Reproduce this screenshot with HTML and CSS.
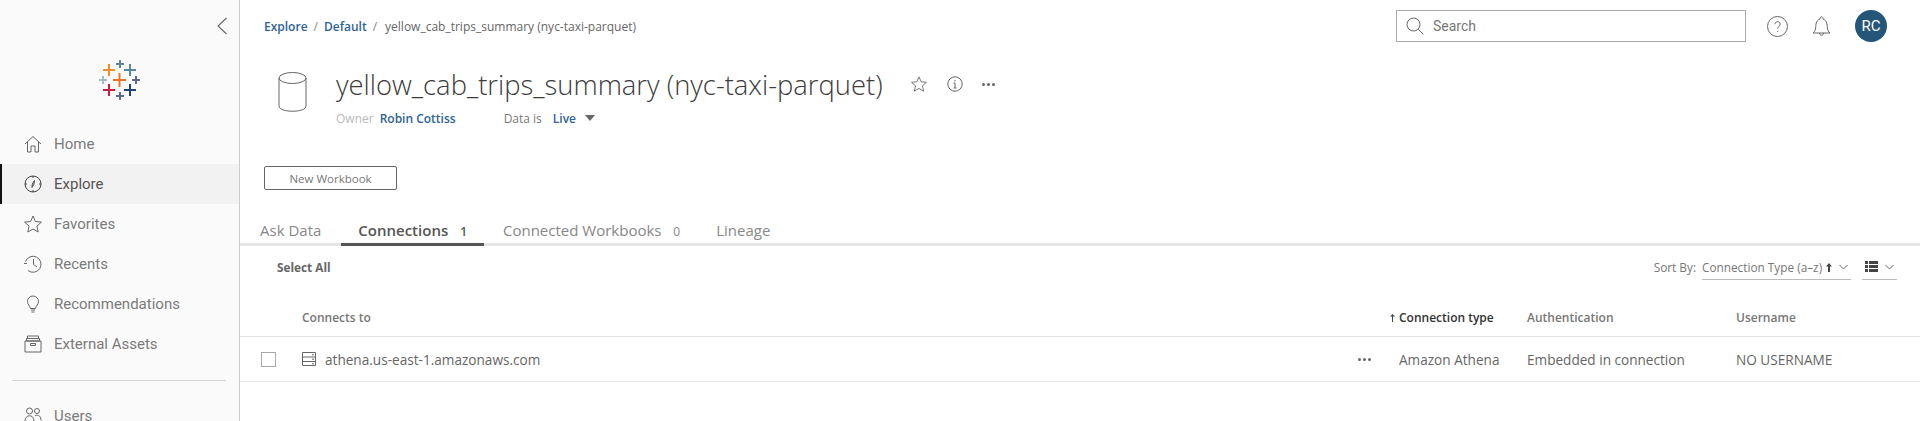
FILE: index.html
```html
<!DOCTYPE html>
<html lang="en">
<head>
	<meta charset="UTF-8">
	<title>yellow_cab_trips_summary (nyc-taxi-parquet)</title>
	<link rel="stylesheet" href="styles.css">
</head>
<body>
	<div class="page">
		<aside class="side">
			<div class="collapse">
				<svg width="12" height="18" viewBox="0 0 12 18"><path d="M10.5 1 2 9l8.500 8" fill="none" stroke="#666" stroke-width="1.100"/></svg>
			</div>
			<div class="logo">
				<svg width="42" height="42" viewBox="0 0 42 42" fill="none" stroke-width="2">
					<path d="M14 21h13M20.500 14v14" stroke="#e8762d"/>
					<path d="M4 11h12M10 5v12" stroke="#f28e2b"/>
					<path d="M17 5h8M21 1v8" stroke="#5b879b"/>
					<path d="M25 11h12M31 5v12" stroke="#5b879b"/>
					<path d="M0 21h8M4 17v8" stroke="#a0bdc8"/>
					<path d="M33 21h8M37 17v8" stroke="#5d6a97"/>
					<path d="M4 31h12M10 25v12" stroke="#c8203f"/>
					<path d="M25 31h12M31 25v12" stroke="#1f447a"/>
					<path d="M17 37h8M21 33v8" stroke="#5b6c96"/>
				</svg>
			</div>
			<nav class="nav">
				<a class="nav-item">
					<svg width="18" height="18" viewBox="0 0 18 18" class="ico"><path d="M1 9 9 1.500 17 9M3.500 7v10h3.500v-6h4v6h3.500V7"/></svg>
					Home
				</a>
				<a class="nav-item active">
					<svg width="18" height="18" viewBox="0 0 18 18" class="ico dark"><circle cx="9" cy="9" r="8"/><path d="M10.500 5.500 9.800 9.500 8 12.500l.3-3.500zM9 1v2M9 15v2M1 9h2M15 9h2"/></svg>
					Explore
				</a>
				<a class="nav-item">
					<svg width="18" height="18" viewBox="0 0 18 18" class="ico"><path d="m9 1 2.400 5.500 6 .6-4.500 4 1.300 5.900L9 14l-5.200 3 1.300-5.900-4.500-4 6-.6z"/></svg>
					Favorites
				</a>
				<a class="nav-item">
					<svg width="18" height="18" viewBox="0 0 18 18" class="ico"><path d="M1.500 6.500A8 8 0 1 1 4 15.500M9.500 4v5.500l3.500 2.500M0 8.500h3"/></svg>
					Recents
				</a>
				<a class="nav-item">
					<svg width="18" height="18" viewBox="0 0 18 18" class="ico"><path d="M6.500 13.500C6 10.500 3.500 9.500 3.500 6.500a5.500 5.500 0 0 1 11 0c0 3-2.500 4-3 7zM7 15h4M7.500 17h3"/></svg>
					Recommendations
				</a>
				<a class="nav-item">
					<svg width="18" height="18" viewBox="0 0 18 18" class="ico"><path d="M1 6h16v11H1zM2.500 3.500h13V6h-13zM3.500 1h11v2.500h-11zM6.500 8.500h5v2h-5z"/></svg>
					External Assets
				</a>
			</nav>
			<div class="side-rule"></div>
			<a class="nav-item">
				<svg width="18" height="18" viewBox="0 0 18 18" class="ico"><circle cx="5.500" cy="4" r="3"/><circle cx="13" cy="4" r="2.500"/><path d="M1 14c0-7 9-7 9 0M11 8.500c4-1 6 1 6 5"/></svg>
				Users
			</a>
		</aside>

		<main class="main">
			<header class="top">
				<div class="crumbs">
					<a>Explore</a><span class="sep">/</span><a>Default</a><span class="sep sep-last">/</span><span class="here">yellow_cab_trips_summary (nyc-taxi-parquet)</span>
				</div>
				<div class="search">
					<svg width="18" height="18" viewBox="0 0 18 18" class="ico"><circle cx="7.500" cy="7.500" r="6.500"/><path d="m12.300 12.300 5 5"/></svg>
					<span>Search</span>
				</div>
				<svg class="help ico" width="21" height="21" viewBox="0 0 21 21"><circle cx="10.500" cy="10.500" r="10"/><path d="M8 8.200c0-3.300 5.200-3.300 5.200 0 0 2-2.500 1.900-2.500 4.300M10.700 15v1"/></svg>
				<svg class="bell ico" width="19" height="22" viewBox="0 0 19 22"><path d="M1 18c3-2.500 2.500-5 3-9 .4-3 2.500-4.500 4-5 0-3 3-3 3 0 1.500.5 3.600 2 4 5 .5 4 0 6.500 3 9zM7.500 18c0 3 4 3 4 0"/></svg>
				<div class="avatar">RC</div>
			</header>

			<section class="head">
				<svg class="cyl ico" width="29" height="41" viewBox="0 0 29 41"><ellipse cx="14.500" cy="6" rx="13.500" ry="5.500"/><path d="M1 6v28c0 7 27 7 27 0V6"/></svg>
				<div>
					<div class="title-row">
						<h1>yellow_cab_trips_summary (nyc-taxi-parquet)</h1>
						<svg class="ico" width="16" height="16" viewBox="0 0 18 18"><path d="m9 1 2.400 5.500 6 .6-4.500 4 1.300 5.900L9 14l-5.200 3 1.300-5.900-4.500-4 6-.6z"/></svg>
						<svg class="ico" width="16" height="16" viewBox="0 0 16 16"><circle cx="8" cy="8" r="7.200"/><path d="M8 7v5M6.500 12h3M6.500 7H8M8 4v1.500"/></svg>
						<div class="dots title-dots"><i></i><i></i><i></i></div>
					</div>
					<div class="meta">
						<span class="muted">Owner</span><a class="owner">Robin Cottiss</a>
						<span class="data-is">Data is</span><a class="live">Live</a><span class="tri"></span>
					</div>
				</div>
			</section>

			<button class="new-btn">New Workbook</button>

			<div class="tabs">
				<a class="tab ask">Ask Data</a>
				<a class="tab on">Connections <b>1</b></a>
				<a class="tab wb">Connected Workbooks <em>0</em></a>
				<a class="tab">Lineage</a>
			</div>

			<div class="tools">
				<strong>Select All</strong>
				<div class="sort">
					<span class="sort-label">Sort By:</span>
					<span class="pick pick-wide">
						<span class="pick-text">Connection Type (a–z)
							<svg width="6" height="9" viewBox="0 0 6 9" class="arrow"><path d="M3 0 6 3.500H4V9H2V3.500H0z"/></svg>
						</span>
						<svg width="9" height="6" viewBox="0 0 9 6"><path d="m.5 1 4 4 4-4" fill="none" stroke="#666"/></svg>
					</span>
					<span class="pick pick-view">
						<svg width="13" height="11" viewBox="0 0 13 11" class="list-ico"><path d="M0 0h3v3H0zM4 0h9v3H4zM0 4h3v3H0zM4 4h9v3H4zM0 8h3v3H0zM4 8h9v3H4z"/></svg>
						<svg width="9" height="6" viewBox="0 0 9 6"><path d="m.5 1 4 4 4-4" fill="none" stroke="#666"/></svg>
					</span>
				</div>
			</div>

			<div class="grid grid-head">
				<span></span>
				<span>Connects to</span>
				<span class="sorted"><svg width="5" height="9" viewBox="0 0 5 9" class="arrow"><path d="M2.500 1 5 3.500H3V9H2V3.500H0z"/></svg>Connection type</span>
				<span>Authentication</span>
				<span>Username</span>
			</div>
			<div class="grid grid-row">
				<span class="check"></span>
				<span class="conn">
					<svg width="14" height="14" viewBox="0 0 14 14" class="ico"><path d="M.5.5h13v13H.5zM.5 5h13M.5 9.500h13M10 2.800h2M10 7.200h2M10 11.800h2"/></svg>
					<span class="conn-name">athena.us-east-1.amazonaws.com</span>
					<span class="dots row-dots"><i></i><i></i><i></i></span>
				</span>
				<span class="type">Amazon Athena</span>
				<span>Embedded in connection</span>
				<span>NO USERNAME</span>
			</div>
		</main>
	</div>
</body>
</html>
```

FILE: styles.css
```css
*{margin: 0;padding: 0;box-sizing: border-box;}
html,body{height: 100%;overflow: hidden;}
body{background: #fff;color: #666;font-family: Roboto,"Liberation Sans",sans-serif;font-size: 13px;}
a{text-decoration: none;}
.ico{fill: none;stroke: #666;stroke-width: 1;flex: none;}
.page{display: flex;height: 421px;overflow: hidden;}

.side{width: 240px;flex: none;height: 421px;background: #fafafa;border-right: 1px solid #cbcbcb;overflow: hidden;}
.collapse{display: flex;justify-content: flex-end;padding: 17px 11px 0 0;height: 59px;}
.logo{display: flex;justify-content: center;height: 65px;}
.nav-item{display: flex;align-items: center;height: 40px;padding-left: 24px;gap: 12px;font-size: 15px;color: #7b7b7b;}
.nav-item svg{width: 18px;height: 18px;}
.nav-item.active{background: #f2f2f2;border-left: 2px solid #111;padding-left: 22px;color: #555;}
.ico.dark{stroke: #444;}
.side-rule{height: 1px;background: #d4d4d4;margin: 16px 13px 15px 12px;}

.main{flex: 1;min-width: 0;}
.top{display: flex;align-items: center;height: 52px;padding: 0 33px 0 24px;}
.crumbs{flex: 1;font-size: 12px;font-family: "Open Sans",Roboto,sans-serif;color: #666;white-space: nowrap;}
.crumbs a{color: #2e6397;font-weight: 600;}
.sep{margin: 0 6px;color: #888;}
.sep-last{margin-right: 8px;}
.here{font-size: 12px;}
.search{display: flex;align-items: center;gap: 9px;width: 350px;height: 32px;margin-right: -1px;border: 1px solid #aaa;padding-left: 9px;font-size: 14px;color: #777;}
.help{margin-left: 22px;}
.bell{margin-left: 24px;}
.avatar{width: 32px;height: 32px;margin-left: 24px;border-radius: 50%;background: #24567a;color: #fff;font-size: 15px;display: flex;align-items: center;justify-content: center;}

.head{display: flex;padding: 20px 0 0 38px;height: 114px;}
.cyl{margin-right: 29px;}
.title-row{display: flex;align-items: center;height: 36px;gap: 20px;margin-top: -6px;}
h1{font-family: "Open Sans",Roboto,sans-serif;font-weight: 300;font-size: 27.400px;color: #3c3c3c;margin-right: 8px;white-space: nowrap;}
.dots{display: inline-flex;gap: 2px;}
.dots i{width: 3px;height: 3px;border-radius: 50%;background: #666;}
.title-dots{margin-left: -1px;}
.meta{display: flex;align-items: center;height: 18px;margin-top: 7px;font-family: "Open Sans",Roboto,sans-serif;font-size: 12px;}
.muted{color: #bbb;}
.owner{color: #2e6397;font-weight: 600;margin-left: 6px;}
.data-is{margin-left: 48px;color: #777;}
.live{color: #2e6397;font-weight: 600;margin-left: 11px;}
.tri{width: 0;height: 0;margin-left: 9px;border: 5px solid transparent;border-top: 6px solid #666;border-bottom: 0;}

.new-btn{display: block;width: 133px;height: 24px;margin-left: 24px;background: #fff;border: 1px solid #666;border-radius: 2px;font-family: "Open Sans",Roboto,sans-serif;font-size: 11.500px;color: #777;}

.tabs{display: flex;height: 56px;align-items: flex-end;border-bottom: 3px solid #e6e6e6;padding-left: 20px;font-family: "Open Sans",Roboto,sans-serif;font-size: 15px;color: #888;}
.tab{height: 26px;margin-bottom: -3px;padding: 0 18px;white-space: nowrap;color: #888;}
.tab.ask{padding: 0 20px 0 0;}
.tab.on{color: #555;font-weight: 600;padding: 0 17px;border-bottom: 3px solid #555;}
.tab.wb{padding-left: 19px;}
.tab b{font-size: 12px;margin-left: 8px;font-weight: 600;}
.tab em{font-size: 12px;font-style: normal;margin-left: 8px;}

.tools{display: flex;align-items: center;justify-content: space-between;height: 42px;padding: 0 23px 0 37px;font-family: "Open Sans",Roboto,sans-serif;font-size: 11.800px;}
.sort{display: flex;align-items: center;gap: 6px;color: #777;}
.pick{display: flex;align-items: center;justify-content: space-between;height: 26px;border-bottom: 1px solid #bbb;white-space: nowrap;}
.pick-wide{width: 149px;padding-right: 3px;}
.pick-view{width: 35px;margin-left: 5px;padding: 0 3px 0 3px;}
.list-ico{fill: #444;}
.arrow{fill: #444;}
.pick-text .arrow{margin-left: 1px;}

.grid{display: grid;grid-template-columns: 62px 1088px 137px 209px 184px;align-items: center;font-family: "Open Sans",Roboto,sans-serif;}
.grid-head{height: 42px;padding-top: 3px;border-bottom: 1px solid #e2e2e2;font-size: 12px;font-weight: 600;color: #777;margin-top: 7px;}
.sorted{color: #333;}
.sorted .arrow{margin-right: 4px;}
.grid-row{height: 45px;border-bottom: 1px solid #e6e6e6;font-size: 13.600px;color: #666;}
.check{width: 15px;height: 15px;margin-left: 21px;border: 1px solid #aaa;}
.conn{display: flex;align-items: center;gap: 9px;}
.conn-name{flex: 1;}
.row-dots{margin-right: 19px;}
.type{padding-left: 9px;}
```
